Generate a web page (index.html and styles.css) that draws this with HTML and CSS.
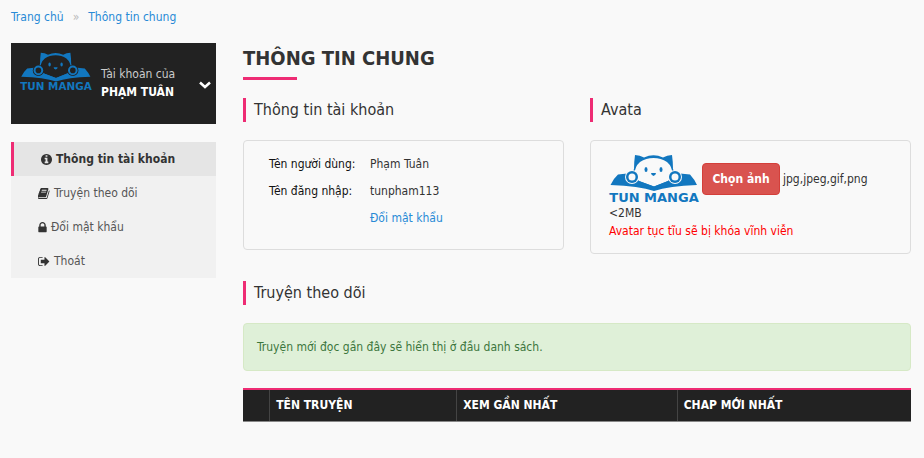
FILE: index.html
```html
<!DOCTYPE html>
<html lang="vi">
<head>
<meta charset="utf-8">
<meta name="viewport" content="width=device-width, initial-scale=1">
<title>Thông tin chung</title>
<link rel="stylesheet" href="styles.css">
</head>
<body>
<svg class="sprite" aria-hidden="true">
  <symbol id="logo" viewBox="0 0 90 50">
    <path fill-rule="evenodd" d="M25 15 Q25 8 26 1 Q31 1 35 3.500 Q44.500 -1 54 3.500 Q58 1 63 1 Q64 8 64 15 L68 24 L60 29 L45 34 L30 29 L21 24 Z M26 25 L30 27 L45 32.500 L59 27 L63 25 Q65 14 58 8 Q52 4 44.500 4 Q37 4 31 8 Q24 14 26 25 Z"/>
    <path d="M9 20.500 L23 19 L30 27 L45 32.500 L59 27 L66 19 L81 20.500 Q86 26 88 31 Q60 32 45 37 Q30 32 1.500 31 Q4 25 9 20.500 Z"/>
    <circle class="logo-gap" cx="23" cy="23" r="7"/>
    <circle cx="23" cy="23" r="6"/>
    <circle class="logo-gap" cx="23" cy="23" r="3.500"/>
    <circle class="logo-gap" cx="66" cy="23" r="7"/>
    <circle cx="66" cy="23" r="6"/>
    <circle class="logo-gap" cx="66" cy="23" r="3.500"/>
    <ellipse cx="37" cy="15.500" rx="1.500" ry="2.500"/>
    <ellipse cx="52" cy="15.500" rx="1.500" ry="2.500"/>
    <path d="M42 19 H47 Q47 21 44.500 22 Q42 21 42 19 Z"/>
  </symbol>
  <symbol id="info" viewBox="128 0 1536 1792"><path d="M1152 1376v-160q0-14-9-23t-23-9h-96v-512q0-14-9-23t-23-9h-320q-14 0-23 9t-9 23v160q0 14 9 23t23 9h96v320h-96q-14 0-23 9t-9 23v160q0 14 9 23t23 9h448q14 0 23-9t9-23zm-128-896v-160q0-14-9-23t-23-9h-192q-14 0-23 9t-9 23v160q0 14 9 23t23 9h192q14 0 23-9t9-23zm640 416q0 209-103 385.500t-279.500 279.500-385.500 103-385.500-103-279.500-279.500-103-385.500 103-385.500 279.500-279.500 385.500-103 385.500 103 279.500 279.500 103 385.500z"/></symbol>
  <symbol id="book" viewBox="64 0 1664 1792"><path d="M1639 478q40 57 18 129l-275 906q-19 64-76.500 107.500t-122.500 43.500h-923q-77 0-148.500-53.500t-99.500-131.500q-24-67-2-127 0-4 3-27t4-37q1-8-3-21.500t-3-19.500q2-11 8-21t16.500-23.500 16.500-23.500q23-38 45-91.500t30-91.500q3-10 .5-30t-.5-28q3-11 17-28t17-23q21-36 42-92t25-90q1-9-2.500-32t.5-28q4-13 22-30.500t22-22.500q19-26 42.500-84.500t27.500-96.500q1-8-3-25.500t-2-26.500q2-8 9-18t18-23 17-21q8-12 16.500-30.500t15-35 16-36 19.500-32 26.500-23.500 36-11.500 47.500 5.500l-1 3q38-9 51-9h761q74 0 114 56t18 130l-274 906q-36 119-71.500 153.500t-128.500 34.500h-869q-27 0-38 15-11 16-1 43 24 70 144 70h923q29 0 56-15.500t35-41.500l300-987q7-22 5-57 38 15 59 43zm-1064 2q-4 13 2 22.500t20 9.500h608q13 0 25.500-9.500t16.500-22.500l21-64q4-13-2-22.500t-20-9.500h-608q-13 0-25.500 9.500t-16.500 22.500zm-83 256q-4 13 2 22.500t20 9.500h608q13 0 25.500-9.500t16.500-22.500l21-64q4-13-2-22.500t-20-9.500h-608q-13 0-25.500 9.500t-16.500 22.500z"/></symbol>
  <symbol id="lock" viewBox="320 0 1152 1792"><path d="M640 768h512v-192q0-106-75-181t-181-75-181 75-75 181v192zm832 96v576q0 40-28 68t-68 28h-960q-40 0-68-28t-28-68v-576q0-40 28-68t68-28h32v-192q0-184 132-316t316-132 316 132 132 316v192h32q40 0 68 28t28 68z"/></symbol>
  <symbol id="exit" viewBox="64 0 1664 1792"><path d="M704 1440q0 4 1 20t.5 26.500-3 23.500-10 19.500-20.500 6.500h-320q-119 0-203.500-84.500t-84.500-203.500v-704q0-119 84.500-203.500t203.500-84.500h320q13 0 22.500 9.500t9.500 22.500q0 4 1 20t.5 26.500-3 23.500-10 19.500-20.500 6.500h-320q-66 0-113 47t-47 113v704q0 66 47 113t113 47h312l11.500 1 11.500 3 8 5.500 7 9 2 13.500zm928-544q0 26-19 45l-544 544q-19 19-45 19t-45-19-19-45v-288h-448q-26 0-45-19t-19-45v-384q0-26 19-45t45-19h448v-288q0-26 19-45t45-19 45 19l544 544q19 19 19 45z"/></symbol>
</svg>

<nav class="breadcrumb" aria-label="Breadcrumb">
  <a href="#">Trang chủ</a><span class="separator">»</span><a href="#">Thông tin chung</a>
</nav>

<div class="layout">
  <aside>
    <button class="account" type="button">
      <svg class="logo logo-small" viewBox="0 0 90 50" aria-hidden="true"><use href="#logo"/><text x="45" y="48" text-anchor="middle">TUN MANGA</text></svg>
      <span class="account-name">Tài khoản của<strong>PHẠM TUÂN</strong></span>
      <svg class="chevron" viewBox="0 0 12 8" aria-hidden="true"><path d="M1 1.500 6 6 11 1.500"/></svg>
    </button>
    <nav class="menu" aria-label="Tài khoản">
      <a class="active" href="#"><svg class="icon icon-info" aria-hidden="true"><use href="#info"/></svg>Thông tin tài khoản</a>
      <a href="#"><svg class="icon icon-wide" aria-hidden="true"><use href="#book"/></svg>Truyện theo dõi</a>
      <a href="#"><svg class="icon icon-lock" aria-hidden="true"><use href="#lock"/></svg>Đổi mật khẩu</a>
      <a href="#"><svg class="icon icon-wide" aria-hidden="true"><use href="#exit"/></svg>Thoát</a>
    </nav>
  </aside>

  <main>
    <h1>THÔNG TIN CHUNG</h1>
    <div class="panels">
      <section>
        <h2>Thông tin tài khoản</h2>
        <dl class="card details">
          <dt>Tên người dùng:</dt><dd>Phạm Tuân</dd>
          <dt>Tên đăng nhập:</dt><dd>tunpham113</dd>
          <dd class="change"><a href="#">Đổi mật khẩu</a></dd>
        </dl>
      </section>
      <section>
        <h2>Avata</h2>
        <div class="card avatar">
          <svg class="logo" viewBox="0 0 90 50" aria-hidden="true"><use href="#logo"/><text x="45" y="48" text-anchor="middle">TUN MANGA</text></svg>
          <button class="choose" type="button">Chọn ảnh</button>
          <span>jpg,jpeg,gif,png</span>
          <div>&lt;2MB</div>
          <div class="warning">Avatar tục tĩu sẽ bị khóa vĩnh viễn</div>
        </div>
      </section>
    </div>
    <section>
      <h2>Truyện theo dõi</h2>
      <p class="notice">Truyện mới đọc gần đây sẽ hiển thị ở đầu danh sách.</p>
      <table>
        <thead>
          <tr><th class="col-image"></th><th class="col-title">TÊN TRUYỆN</th><th class="col-recent">XEM GẦN NHẤT</th><th>CHAP MỚI NHẤT</th></tr>
        </thead>
      </table>
    </section>
  </main>
</div>
</body>
</html>
```
FILE: styles.css
```css
* {
  box-sizing: border-box;
}

body {
  --page: #f9f9f9;
  --dark: #222;
  --pink: #ee2c74;
  --link: #288ad6;
  margin: 0;
  padding: 8px 13px 36px 11px;
  background: var(--page);
  color: #333;
  font: 12px/18px "DejaVu Sans Condensed", "Noto Sans", sans-serif;
}

a {
  color: var(--link);
  text-decoration: none;
}

h1, h2, p, dl, dd {
  margin: 0;
}

button {
  font: inherit;
  cursor: pointer;
}

.sprite {
  position: absolute;
  width: 0;
  height: 0;
}

.separator {
  padding: 0 9px;
  color: #bbb;
}

.layout {
  display: grid;
  grid-template-columns: 205px minmax(0, 1fr);
  gap: 27px;
  align-items: start;
  margin-top: 17px;
}

.logo {
  --logo-bg: var(--page);
  width: 90px;
  height: 50px;
  overflow: visible;
  fill: #1277bf;
}

.logo-gap {
  fill: var(--logo-bg);
}

.logo text {
  font: bold 13px "DejaVu Sans", sans-serif;
}

.logo-small {
  --logo-bg: var(--dark);
  width: 72px;
  height: 40px;
}

.account {
  display: flex;
  align-items: flex-start;
  width: 100%;
  min-height: 81px;
  padding: 9px;
  border: 0;
  background: var(--dark);
  color: #ccc;
  text-align: left;
}

.account-name {
  flex: 1;
  padding: 13px 0 0 9px;
}

.account-name strong {
  display: block;
  color: #fff;
}

.chevron {
  width: 12px;
  height: 8px;
  margin: 29px -4px 0 0;
  fill: none;
  stroke: #fff;
  stroke-width: 2.5;
}

.menu {
  margin-top: 18px;
  background: #f1f1f1;
}

.menu a {
  display: flex;
  align-items: center;
  gap: 4px;
  padding: 8px 8px 8px 27px;
  color: #555;
}

.menu .active {
  border-left: 3px solid var(--pink);
  background: #e5e5e5;
  color: #333;
  font-weight: bold;
}

.icon {
  height: 13px;
  fill: #333;
}

.icon-info {
  width: 11px;
}

.icon-wide {
  width: 12px;
}

.icon-lock {
  width: 9px;
}

h1 {
  font-size: 20px;
  line-height: 30px;
}

h1::after {
  display: block;
  width: 54px;
  height: 3px;
  margin-top: 4px;
  background: var(--pink);
  content: "";
}

h2 {
  margin: 18px 0;
  padding-left: 8px;
  border-left: 3px solid var(--pink);
  font-size: 16px;
  font-weight: normal;
  line-height: 24px;
}

.panels {
  display: grid;
  grid-template-columns: repeat(2, minmax(0, 1fr));
  gap: 26px;
  margin-bottom: 27px;
}

.card {
  border: 1px solid #ddd;
  border-radius: 4px;
}

.details {
  display: grid;
  grid-template-columns: 92px 1fr;
  gap: 9px;
  padding: 14px 25px 22px;
}

.details dt {
  color: #111;
  white-space: nowrap;
}

.change {
  grid-column: 2;
}

.avatar {
  padding: 13px 18px;
}

.avatar .logo {
  vertical-align: middle;
}

.choose {
  padding: 5px 9px;
  border: 1px solid #d43f3a;
  border-radius: 4px;
  background: #d9534f;
  color: #fff;
  font-weight: bold;
  line-height: 20px;
}

.warning {
  color: #f00;
}

.notice {
  padding: 14px 13px;
  border: 1px solid #d6e9c6;
  border-radius: 4px;
  background: #dff0d8;
  color: #3c763d;
}

table {
  width: 100%;
  margin-top: 17px;
  border-collapse: collapse;
  table-layout: fixed;
}

th {
  height: 32px;
  padding: 0 6px;
  border-top: 2px solid var(--pink);
  border-right: 1px solid #444;
  border-bottom: 1px solid #888;
  background: var(--dark);
  color: #fff;
  text-align: left;
}

th:last-child {
  border-right: 0;
}

.col-image {
  width: 4%;
}

.col-title {
  width: 28%;
}

.col-recent {
  width: 33%;
}
```
